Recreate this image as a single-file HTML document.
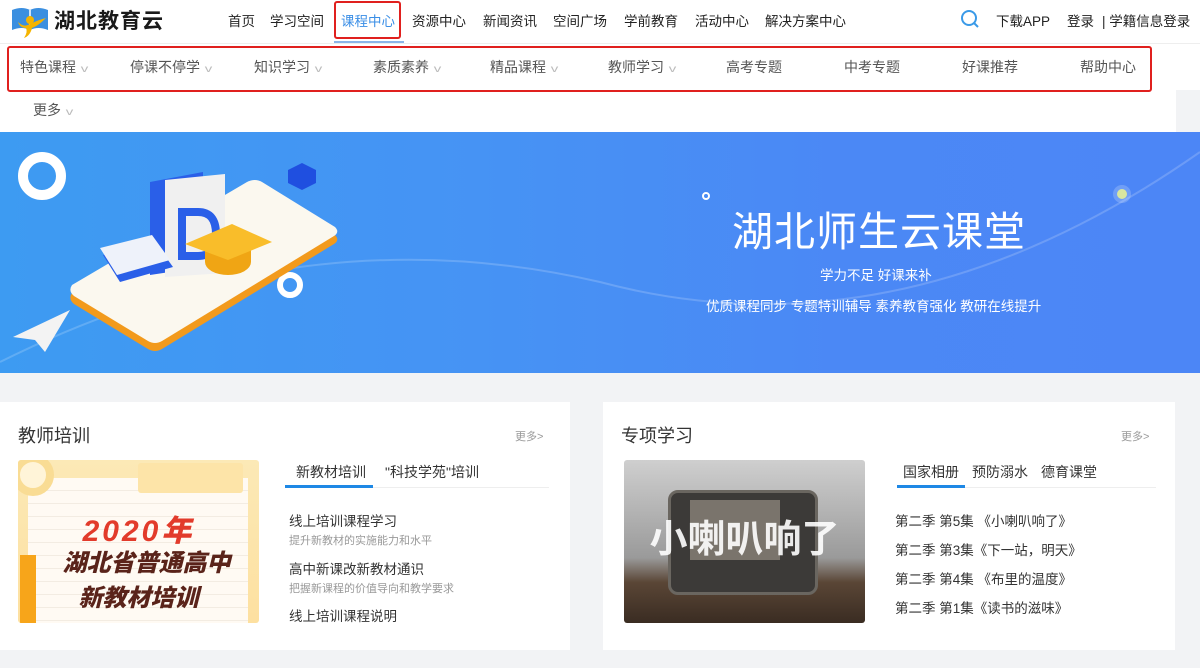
<!DOCTYPE html>
<html><head><meta charset="utf-8">
<style>
*{margin:0;padding:0;box-sizing:border-box}
body{width:1200px;height:668px;overflow:hidden;background:#f2f3f5;font-family:"Liberation Sans","Noto Sans CJK SC",sans-serif;position:relative;color:#333}
.top{position:absolute;left:0;top:0;width:1200px;height:132px;background:#fff}
.grayr{position:absolute;left:1176px;top:90px;width:24px;height:42px;background:#f2f3f5}
.logo{position:absolute;left:10px;top:4px}
.logotxt{position:absolute;left:54px;top:5px;font-size:21px;font-weight:bold;color:#1a1a1a;letter-spacing:1px}
.nav{position:absolute;top:10px;font-size:13.5px;color:#222}
.act{color:#3a8ee6}
.actbox{position:absolute;left:334px;top:1px;width:67px;height:38px;border:2px solid #e0201e;border-radius:3px}
.actline{position:absolute;left:334px;top:41px;width:70px;height:2px;background:#8ab4e8}
.hline{position:absolute;left:0;top:43px;width:1200px;height:1px;background:#eee}
.sub{position:absolute;left:7px;top:46px;width:1145px;height:46px;border:2px solid #e0201e;border-radius:3px}
.si{position:absolute;top:57px;font-size:14px;color:#555}
.si i{font-style:normal;color:#bbb;font-size:10px;margin-left:6px;display:inline-block;transform:scaleX(1.5)}
.banner{position:absolute;left:0;top:132px;width:1200px;height:241px;background:linear-gradient(90deg,#3d9bf2 0%,#4693f4 40%,#4b88f5 70%,#4c86f6 100%);overflow:hidden}
.card{position:absolute;top:402px;height:248px;background:#fff}
.ct{position:absolute;left:18px;top:20px;font-size:18px;color:#333}
.more{position:absolute;top:26px;font-size:11px;color:#999}
.tab{position:absolute;top:60px;font-size:14px;color:#333}
.tl{position:absolute;top:85px;height:1px;background:#eee}
.tb{position:absolute;top:83px;height:3px;background:#1e88e5}
.li{position:absolute;font-size:13.5px;color:#333}
.sm{position:absolute;font-size:11px;color:#999}
</style></head><body>
<div class="top"></div>
<div class="grayr"></div>
<svg class="logo" width="42" height="36" viewBox="0 0 42 36">
<path d="M2 6 Q12 2 20 6 Q28 2 38 6 L38 26 Q28 22 20 26 Q12 22 2 26Z" fill="#3b8fe0"/>
<path d="M20 6 V26" stroke="#fff" stroke-width="1.5"/>
<circle cx="20" cy="16" r="4" fill="#f5b400"/>
<path d="M8 18 Q14 24 20 20 Q28 16 36 14 Q28 22 22 24 Q20 32 14 34 Q18 28 16 24 Q10 24 8 18Z" fill="#f5b400"/>
</svg>
<div class="logotxt">湖北教育云</div>
<div class="nav" style="left:228px">首页</div>
<div class="nav" style="left:270px">学习空间</div>
<div class="nav act" style="left:341px">课程中心</div>
<div class="nav" style="left:412px">资源中心</div>
<div class="nav" style="left:483px">新闻资讯</div>
<div class="nav" style="left:553px">空间广场</div>
<div class="nav" style="left:624px">学前教育</div>
<div class="nav" style="left:695px">活动中心</div>
<div class="nav" style="left:765px">解决方案中心</div>
<div class="actbox"></div><div class="actline"></div>
<svg style="position:absolute;left:960px;top:9px" width="20" height="20" viewBox="0 0 20 20"><circle cx="9" cy="9" r="7" fill="none" stroke="#3a9ae8" stroke-width="2"/><path d="M14 14 L18 18" stroke="#3a9ae8" stroke-width="2"/></svg>
<div class="nav" style="left:996px">下载APP</div>
<div class="nav" style="left:1067px">登录</div>
<div class="nav" style="left:1102px">| 学籍信息登录</div>
<div class="hline"></div>
<div class="sub"></div>
<div class="si" style="left:20px">特色课程<i>v</i></div>
<div class="si" style="left:130px">停课不停学<i>v</i></div>
<div class="si" style="left:254px">知识学习<i>v</i></div>
<div class="si" style="left:373px">素质素养<i>v</i></div>
<div class="si" style="left:490px">精品课程<i>v</i></div>
<div class="si" style="left:608px">教师学习<i>v</i></div>
<div class="si" style="left:726px">高考专题</div>
<div class="si" style="left:844px">中考专题</div>
<div class="si" style="left:962px">好课推荐</div>
<div class="si" style="left:1080px">帮助中心</div>
<div class="si" style="left:33px;top:100px">更多<i>v</i></div>

<div class="banner">
<svg width="1200" height="241" style="position:absolute;left:0;top:0">
<path d="M0 230 Q300 80 600 150 Q900 230 1200 20" fill="none" stroke="rgba(255,255,255,.18)" stroke-width="2"/>
<circle cx="42" cy="44" r="19" fill="none" stroke="#fff" stroke-width="10"/>
<circle cx="290" cy="153" r="10" fill="none" stroke="#fff" stroke-width="6"/>
<path d="M288 38 l14 -7 l14 7 v13 l-14 7 l-14 -7z" fill="#1f4fe0"/>
<path d="M72 161 L247 58 Q255 54 262 58 L335 103 Q340 108 334 112 L162 217 Q155 221 148 217 L74 172 Q68 167 72 161Z" fill="#f29a1c"/>
<path d="M72 153 L247 50 Q255 46 262 50 L335 95 Q340 100 334 104 L162 209 Q155 213 148 209 L74 164 Q68 159 72 153Z" fill="#fbf8ef"/>
<path d="M150 50 L203 40 L203 135 L150 143Z" fill="#2a5fe8"/>
<path d="M165 48 L225 42 L225 141 L165 145Z" fill="#f0f0f0"/>
<path d="M182 80 h16 q18 0 18 22 q0 22 -18 22 h-16z" fill="none" stroke="#2a5fe8" stroke-width="8"/>
<path d="M103 123 L155 110 L173 135 L120 150Z" fill="#2a5fe8"/><path d="M100 116 L152 103 L170 128 L117 143Z" fill="#eef2fa"/>
<ellipse cx="228" cy="130" rx="23" ry="13" fill="#f0a514"/>
<rect x="205" y="110" width="46" height="20" fill="#f0a514"/>
<path d="M185 112 L232 92 L272 110 L228 128Z" fill="#f9bd2a"/>
<path d="M13 205 L70 178 L45 220 L35 208Z" fill="#f3f3f3"/>
<circle cx="1122" cy="62" r="9" fill="rgba(255,255,255,.2)"/><circle cx="1122" cy="62" r="5" fill="#d9e6a0"/>
<circle cx="706" cy="64" r="3" fill="none" stroke="#fff" stroke-width="2"/>
</svg>
<div style="position:absolute;left:732px;top:66px;font-size:41px;color:#fff;letter-spacing:1px">湖北师生云课堂</div>
<div style="position:absolute;left:820px;top:132px;font-size:13.5px;color:#fff">学力不足 好课来补</div>
<div style="position:absolute;left:706px;top:163px;font-size:13.5px;color:#fff">优质课程同步 专题特训辅导 素养教育强化 教研在线提升</div>
</div>

<div class="card" style="left:0;width:570px">
<div class="ct">教师培训</div><div class="more" style="left:515px">更多&gt;</div>
<div style="position:absolute;left:18px;top:58px;width:241px;height:163px;border-radius:3px;background:linear-gradient(#fce9b6,#fde0a0);overflow:hidden">
<div style="position:absolute;left:10px;top:18px;width:220px;height:150px;background:repeating-linear-gradient(#fffaf3 0 12px,#f3ece2 12px 13px)"></div>
<div style="position:absolute;left:120px;top:3px;width:105px;height:30px;background:#fde4a8;border-radius:3px"></div>
<div style="position:absolute;width:42px;height:42px;border-radius:50%;border:8px solid #f9dc94;background:#fff4d8;left:-6px;top:-6px"></div>
<div style="position:absolute;left:2px;top:95px;width:16px;height:70px;background:#f7a51a"></div>
<div style="position:absolute;left:0;top:46px;width:241px;text-align:center;font-size:30px;font-weight:900;font-style:italic;color:#e23b2b;letter-spacing:3px">2020年</div>
<div style="position:absolute;left:8px;top:83px;width:241px;text-align:center;font-size:24px;font-weight:900;font-style:italic;color:#5a231a">湖北省普通高中</div>
<div style="position:absolute;left:0;top:118px;width:241px;text-align:center;font-size:24px;font-weight:900;font-style:italic;color:#5a231a">新教材培训</div>
</div>
<div class="tab act" style="left:296px">新教材培训</div>
<div class="tab" style="left:385px">"科技学苑"培训</div>
<div class="tl" style="left:285px;width:264px"></div><div class="tb" style="left:285px;width:88px"></div>
<div class="li" style="left:289px;top:108px">线上培训课程学习</div>
<div class="sm" style="left:289px;top:130px">提升新教材的实施能力和水平</div>
<div class="li" style="left:289px;top:156px">高中新课改新教材通识</div>
<div class="sm" style="left:289px;top:178px">把握新课程的价值导向和教学要求</div>
<div class="li" style="left:289px;top:203px">线上培训课程说明</div>
</div>

<div class="card" style="left:603px;width:572px">
<div class="ct">专项学习</div><div class="more" style="left:518px">更多&gt;</div>
<div style="position:absolute;left:21px;top:58px;width:241px;height:163px;border-radius:3px;background:linear-gradient(#cfcfcf,#9a9a9a 60%,#5a4636 75%,#3a2c22);overflow:hidden">
<div style="position:absolute;left:44px;top:30px;width:150px;height:105px;background:#3c3a38;border-radius:10px;border:3px solid #6a6660"></div>
<div style="position:absolute;left:66px;top:40px;width:90px;height:60px;background:#7a746c"></div>
<div style="position:absolute;left:0;top:48px;width:241px;text-align:center;font-size:38px;font-weight:bold;color:#fff;opacity:.9">小喇叭响了</div>
</div>
<div class="tab act" style="left:300px">国家相册</div>
<div class="tab" style="left:369px">预防溺水</div>
<div class="tab" style="left:438px">德育课堂</div>
<div class="tl" style="left:294px;width:259px"></div><div class="tb" style="left:294px;width:68px"></div>
<div class="li" style="left:292px;top:108px">第二季 第5集 《小喇叭响了》</div>
<div class="li" style="left:292px;top:137px">第二季 第3集《下一站，明天》</div>
<div class="li" style="left:292px;top:166px">第二季 第4集 《布里的温度》</div>
<div class="li" style="left:292px;top:195px">第二季 第1集《读书的滋味》</div>
</div>
</body></html>
